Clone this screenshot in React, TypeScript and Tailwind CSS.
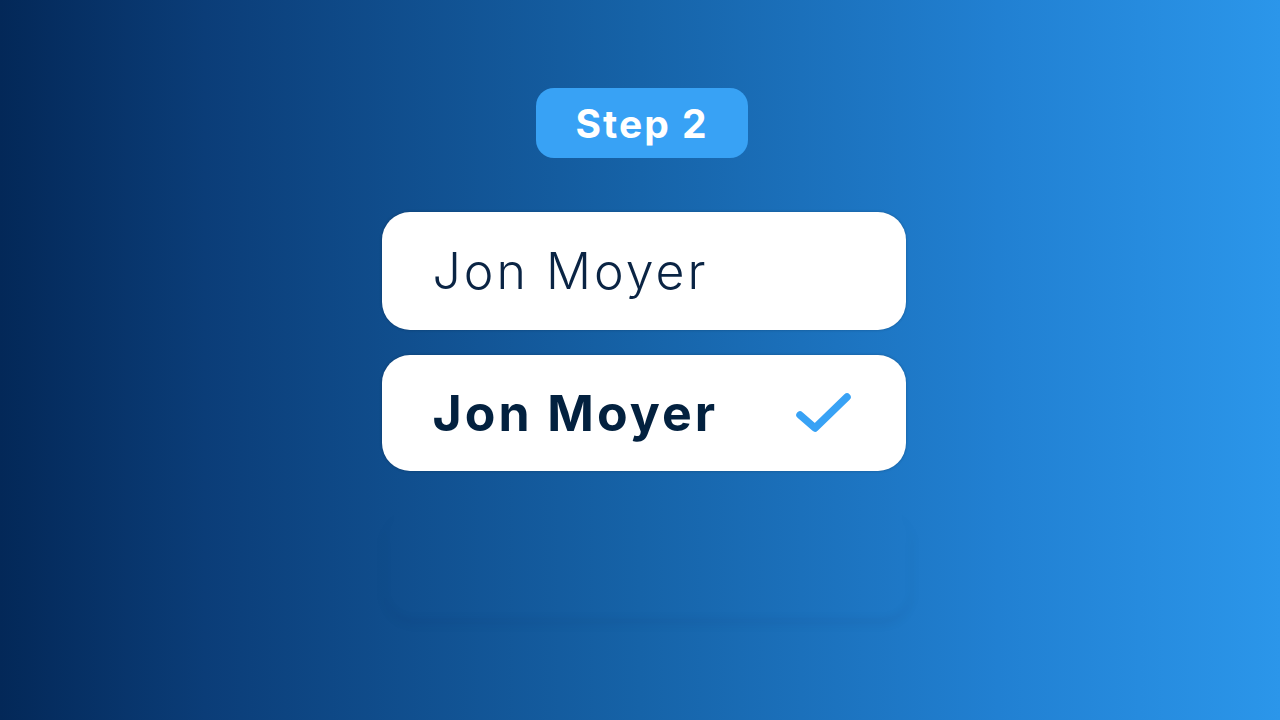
import React from "react";

export default function App() {
  return (
    <div
      className="w-[1280px] h-[720px] overflow-hidden relative flex flex-col items-center bg-[linear-gradient(90deg,#032858_0%,#0b3d78_16%,#1663a8_50%,#2180d2_78%,#2b96ea_100%)]"
      style={{ fontFamily: "Inter, 'Open Sans', sans-serif" }}
    >
      <div className="mt-[88px] ml-[4px] w-[212px] h-[70px] rounded-[18px] bg-[#38a2f5] flex items-center justify-center">
        <span className="text-white font-bold text-[39px] tracking-[2px] leading-none">Step 2</span>
      </div>

      <div className="mt-[54px] ml-[11px] flex flex-col gap-[25px] relative">
        <div className="w-[524px] h-[118px] rounded-[28px] bg-white shadow-[0_0_3px_rgba(0,0,0,0.25)] flex items-center pl-[51px]">
          <span className="text-[#0a2444] font-light text-[50px] leading-none tracking-[3px]">Jon Moyer</span>
        </div>
        <div className="w-[524px] h-[116px] rounded-[28px] bg-white shadow-[0_0_3px_rgba(0,0,0,0.25)] flex items-center pl-[51px] pr-[50px] justify-between">
          <span className="text-[#03213f] font-bold text-[50px] leading-none tracking-[3px]">Jon Moyer</span>
          <svg width="62" height="46" viewBox="0 0 62 46">
            <path d="M6 25 L21 38 L53 7" fill="none" stroke="#38a2f5" strokeWidth="7.5" strokeLinecap="round" strokeLinejoin="round" />
          </svg>
        </div>
        <div className="w-[524px] h-[108px] mt-[14px] ml-[4px] rounded-[28px] shadow-[0_5px_8px_rgba(0,20,60,0.07)] blur-[3px]" />
      </div>
    </div>
  );
}
